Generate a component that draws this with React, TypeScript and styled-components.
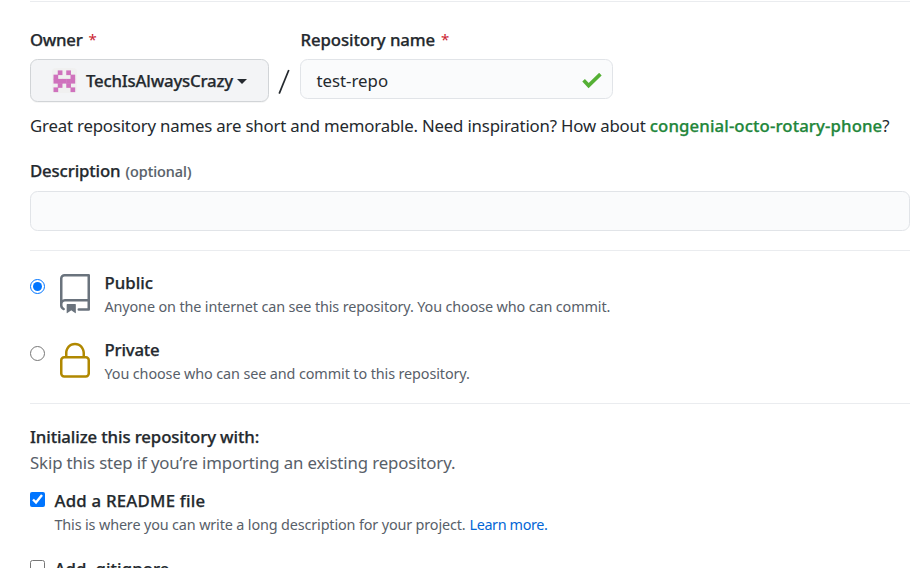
import React from "react";
import styled, { createGlobalStyle } from "styled-components";

const GlobalStyle = createGlobalStyle`
  * { box-sizing: border-box; }
  html, body { margin: 0; height: 568px; overflow: hidden; background: #fff; }
  body { font-family: "Noto Sans", "Open Sans", sans-serif; color: #24292e; }
`;

const Page = styled.main`
  width: 918px;
  height: 568px;
  padding: 1px 8px 0 30px;
  overflow: hidden;
  display: flex;
  flex-direction: column;
`;

const Divider = styled.div`
  flex: none;
  height: 1px;
  background: #eaecef;
`;

const Label = styled.span<{ $track?: number }>`
  font-size: 16.8px;
  font-weight: 500;
  -webkit-text-stroke: 0.25px currentColor;
  line-height: 26px;
  white-space: nowrap;
  letter-spacing: ${(p) => p.$track ?? 0}px;
`;

const Text = styled.span<{ $track?: number }>`
  font-size: 16.8px;
  line-height: 26px;
  white-space: nowrap;
  letter-spacing: ${(p) => p.$track ?? 0}px;
`;

const Note = styled(Text)`
  font-size: 14.4px;
  line-height: 22px;
  color: #586069;
`;

const Muted = styled(Text)`
  color: #586069;
`;

const Optional = styled(Note)`
  font-weight: 500;
  -webkit-text-stroke: 0.15px currentColor;
  margin-left: 5px;
`;

const Suggestion = styled(Label)`
  color: #22863a;
`;

const Link = styled(Note)`
  color: #0366d6;
  margin-left: 4px;
`;

const Required = styled.span`
  color: #cb2431;
  font-size: 15px;
  line-height: 25px;
  margin-left: 6px;
`;

const NameRow = styled.div`
  display: flex;
  flex: none;
  height: 101px;
  padding-top: 25px;
`;

const Field = styled.div<{ $width: number }>`
  width: ${(p) => p.$width}px;
  display: flex;
  flex-direction: column;
  gap: 6px;
`;

const LabelLine = styled.div<{ $indent?: number }>`
  display: flex;
  height: 26px;
  padding-left: ${(p) => p.$indent ?? 0}px;
`;

const OwnerButton = styled.button`
  height: 43px;
  margin: 0;
  padding: 0 20px 0 20.5px;
  display: flex;
  align-items: center;
  font-family: inherit;
  color: #24292e;
  background: #f3f4f6;
  border: 1px solid #d1d4d7;
  border-radius: 7.5px;
  box-shadow: 0 1px 0 rgba(27, 31, 35, 0.04);
`;

const Caret = styled.i`
  margin: 1px 0 0 4px;
  border: 5px solid transparent;
  border-top-color: #24292e;
  border-bottom: 0;
`;

const Slash = styled.div`
  width: 30px;
  margin-right: 1px;
  padding-top: 42px;
  display: flex;
  justify-content: center;
`;

const InputBox = styled.div`
  flex: none;
  height: 40px;
  padding: 3px 10px 0 15.5px;
  display: flex;
  align-items: center;
  justify-content: space-between;
  background: #fafbfc;
  border: 1px solid #e1e4e8;
  border-radius: 7.5px;
`;

const Hint = styled.div`
  flex: none;
  display: flex;
  height: 26px;
  margin-top: 10px;
`;

const DescriptionField = styled.div`
  flex: none;
  display: flex;
  flex-direction: column;
  gap: 7px;
  margin-top: 19px;
  margin-bottom: 19px;
`;

const DescriptionLabel = styled.div`
  display: flex;
  align-items: baseline;
  height: 26px;
`;

const Option = styled.label<{ $top: number; $height: number }>`
  flex: none;
  display: flex;
  margin-top: ${(p) => p.$top}px;
  height: ${(p) => p.$height}px;
`;

const Control = styled.input<{ $top: number; $gap: number }>`
  flex: none;
  width: 15px;
  height: 15px;
  margin: ${(p) => p.$top}px ${(p) => p.$gap}px 0 0;
`;

const OptionText = styled.div<{ $left: number }>`
  display: flex;
  flex-direction: column;
  margin-left: ${(p) => p.$left}px;
`;

const NoteLine = styled.div`
  display: flex;
`;

const Intro = styled.div`
  flex: none;
  display: flex;
  flex-direction: column;
  margin-top: 20px;
`;

const AVATAR = ["01010", "10001", "11111", "01010", "10001"];

const Avatar = () => (
  <svg width="25" height="25" viewBox="0 0 25 25">
    <rect width="25" height="25" rx="4" fill="#f0f0f0" />
    {AVATAR.flatMap((row, y) =>
      [...row].map((c, x) =>
        c === "1" ? (
          <rect key={`${x}-${y}`} x={1.5 + x * 4.25} y={2.4 + y * 4.25} width="4.7" height="4.7" fill="#cf72bd" />
        ) : null
      )
    )}
  </svg>
);

const OwnerName = styled(Label)`
  margin-left: 9.5px;
`;

const RepoIcon = () => (
  <svg width="40" height="40" viewBox="0 0 24 24" fill="#6a737d">
    <path fillRule="evenodd" d="M3 2.75A2.75 2.75 0 015.75 0h14.5a.75.75 0 01.75.75v20.5a.75.75 0 01-.75.75h-6a.75.75 0 010-1.5h5.25v-4H6A1.5 1.5 0 004.5 18v.75c0 .716.43 1.334 1.05 1.605a.75.75 0 01-.6 1.374A3.25 3.25 0 013 18.75v-16zM19.5 1.5V15H6c-.546 0-1.059.146-1.5.401V2.75c0-.69.56-1.25 1.25-1.25H19.5z" />
    <path d="M7 18.25a.25.25 0 01.25-.25h5a.25.25 0 01.25.25v5.01a.25.25 0 01-.397.201l-2.206-1.604a.25.25 0 00-.294 0L7.397 23.46a.25.25 0 01-.397-.2v-5.01z" />
  </svg>
);

const LockIcon = () => (
  <svg width="40" height="40" viewBox="0 0 24 24" fill="#b08800">
    <path fillRule="evenodd" d="M6 9V7.25C6 3.845 8.503 1 12 1s6 2.845 6 6.25V9h.5a2.5 2.5 0 012.5 2.5v8a2.5 2.5 0 01-2.5 2.5h-13A2.5 2.5 0 013 19.5v-8A2.5 2.5 0 015.5 9H6zm1.5-1.75C7.5 4.58 9.422 2.5 12 2.5c2.578 0 4.5 2.08 4.5 4.75V9h-9V7.25zm-3 4.25a1 1 0 011-1h13a1 1 0 011 1v8a1 1 0 01-1 1h-13a1 1 0 01-1-1v-8z" />
  </svg>
);

const IconSlot = styled.span`
  flex: none;
  width: 40px;
  height: 40px;
  margin-top: 4px;
  display: flex;
`;

const CheckMark = () => (
  <svg width="20" height="16" viewBox="0 0 20 16">
    <path d="M1.6 7.3 L6.6 12.6 L18.4 1.1" fill="none" stroke="#55b035" strokeWidth="3.6" />
  </svg>
);

export default function App() {
  return (
    <>
      <GlobalStyle />
      <Page>
        <Divider />
        <NameRow>
          <Field $width={239}>
            <LabelLine>
              <Label $track={-0.3}>Owner</Label>
              <Required>*</Required>
            </LabelLine>
            <OwnerButton>
              <Avatar />
              <OwnerName $track={-0.2}>TechIsAlwaysCrazy</OwnerName>
              <Caret />
            </OwnerButton>
          </Field>
          <Slash>
            <svg width="12" height="26" viewBox="0 0 12 26">
              <path d="M1.2 24.6 L10.8 1" stroke="#24292e" strokeWidth="1.7" />
            </svg>
          </Slash>
          <Field $width={313}>
            <LabelLine $indent={0.5}>
              <Label $track={-0.11}>Repository name</Label>
              <Required>*</Required>
            </LabelLine>
            <InputBox>
              <Text>test-repo</Text>
              <CheckMark />
            </InputBox>
          </Field>
        </NameRow>
        <Hint>
          <Text $track={-0.18}>
            Great repository names are short and memorable. Need inspiration? How about&nbsp;
          </Text>
          <Suggestion $track={0.1}>congenial-octo-rotary-phone</Suggestion>
          <Text>?</Text>
        </Hint>
        <DescriptionField>
          <DescriptionLabel>
            <Label $track={-0.15}>Description</Label>
            <Optional>(optional)</Optional>
          </DescriptionLabel>
          <InputBox />
        </DescriptionField>
        <Divider />
        <Option $top={19} $height={67}>
          <Control type="radio" name="visibility" defaultChecked $top={9} $gap={10} />
          <IconSlot><RepoIcon /></IconSlot>
          <OptionText $left={9.5}>
            <Label>Public</Label>
            <Note $track={-0.13}>Anyone on the internet can see this repository. You choose who can commit.</Note>
          </OptionText>
        </Option>
        <Option $top={0} $height={66}>
          <Control type="radio" name="visibility" $top={9} $gap={10} />
          <IconSlot><LockIcon /></IconSlot>
          <OptionText $left={9.5}>
            <Label $track={-0.2}>Private</Label>
            <Note $track={-0.11}>You choose who can see and commit to this repository.</Note>
          </OptionText>
        </Option>
        <Divider />
        <Intro>
          <Label $track={-0.12}>Initialize this repository with:</Label>
          <Muted $track={-0.12}>Skip this step if you’re importing an existing repository.</Muted>
        </Intro>
        <Option $top={12} $height={67}>
          <Control type="checkbox" defaultChecked $top={4} $gap={0} />
          <OptionText $left={9.5}>
            <Label $track={0.22}>Add a README file</Label>
            <NoteLine>
              <Note $track={-0.14}>This is where you can write a long description for your project.</Note>
              <Link $track={-0.37}>Learn more.</Link>
            </NoteLine>
          </OptionText>
        </Option>
        <Option $top={1} $height={40}>
          <Control type="checkbox" $top={4} $gap={0} />
          <OptionText $left={9.5}>
            <Label $track={0.06}>Add .gitignore</Label>
          </OptionText>
        </Option>
      </Page>
    </>
  );
}
